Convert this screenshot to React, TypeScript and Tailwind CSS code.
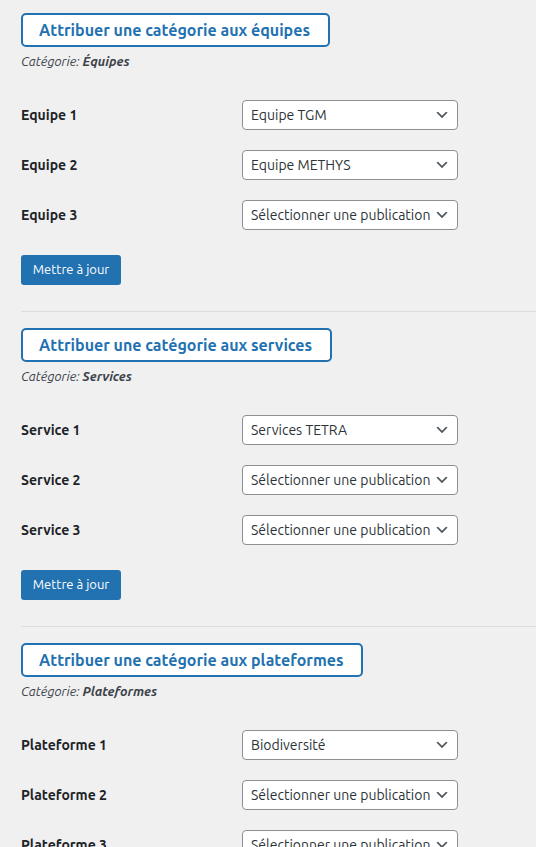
const FONT = "font-['Ubuntu','Noto_Sans',sans-serif]"

type Row = { label: string; value: string }

const sections: { title: string; category: string; rows: Row[] }[] = [
  {
    title: 'Attribuer une catégorie aux équipes',
    category: 'Équipes',
    rows: [
      { label: 'Equipe 1', value: 'Equipe TGM' },
      { label: 'Equipe 2', value: 'Equipe METHYS' },
      { label: 'Equipe 3', value: 'Sélectionner une publication' },
    ],
  },
  {
    title: 'Attribuer une catégorie aux services',
    category: 'Services',
    rows: [
      { label: 'Service 1', value: 'Services TETRA' },
      { label: 'Service 2', value: 'Sélectionner une publication' },
      { label: 'Service 3', value: 'Sélectionner une publication' },
    ],
  },
  {
    title: 'Attribuer une catégorie aux plateformes',
    category: 'Plateformes',
    rows: [
      { label: 'Plateforme 1', value: 'Biodiversité' },
      { label: 'Plateforme 2', value: 'Sélectionner une publication' },
      { label: 'Plateforme 3', value: 'Sélectionner une publication' },
    ],
  },
]

function FakeSelect({ value }: { value: string }) {
  return (
    <div className="relative flex items-center w-[216px] h-[30px] bg-white border border-[#8c8f94] rounded-[4px] pl-[8px] pr-[24px] text-[14px] text-[#2c3338] overflow-hidden">
      <span className="whitespace-nowrap overflow-hidden">{value}</span>
      <svg
        className="absolute right-[7px] top-[6px] w-[16px] h-[16px]"
        viewBox="0 0 20 20"
        fill="#50575e"
      >
        <path d="M5 6l5 5 5-5 2 1-7 7-7-7 2-1z" />
      </svg>
    </div>
  )
}

export default function App() {
  return (
    <div className={`min-h-screen bg-[#f0f0f1] pl-[21px] pt-[13px] ${FONT}`}>
      {sections.map((s, i) => (
        <div key={i}>
          {i > 0 && <div className="h-px bg-[#dcdcde] mt-[26px] mb-[16px]" />}
          <div className="inline-flex items-center h-[34px] bg-white border-2 border-[#2271b1] rounded-[5px] pl-[16px] pr-[18px]">
            <span className="text-[16px] font-bold text-[#2271b1] leading-none">{s.title}</span>
          </div>
          <p className="mt-[4px] text-[13px] leading-[20px] italic text-[#3c434a]">
            Catégorie: <b className="font-bold">{s.category}</b>
          </p>
          <div className="mt-[19px]">
            {s.rows.map((r) => (
              <div key={r.label} className="flex items-center h-[50px]">
                <div className="w-[221px] text-[14px] font-bold text-[#1d2327]">{r.label}</div>
                <FakeSelect value={r.value} />
              </div>
            ))}
          </div>
          <button className="mt-[15px] h-[30px] w-[100px] bg-[#2271b1] rounded-[3px] text-white text-[13px]">
            Mettre à jour
          </button>
        </div>
      ))}
    </div>
  )
}
